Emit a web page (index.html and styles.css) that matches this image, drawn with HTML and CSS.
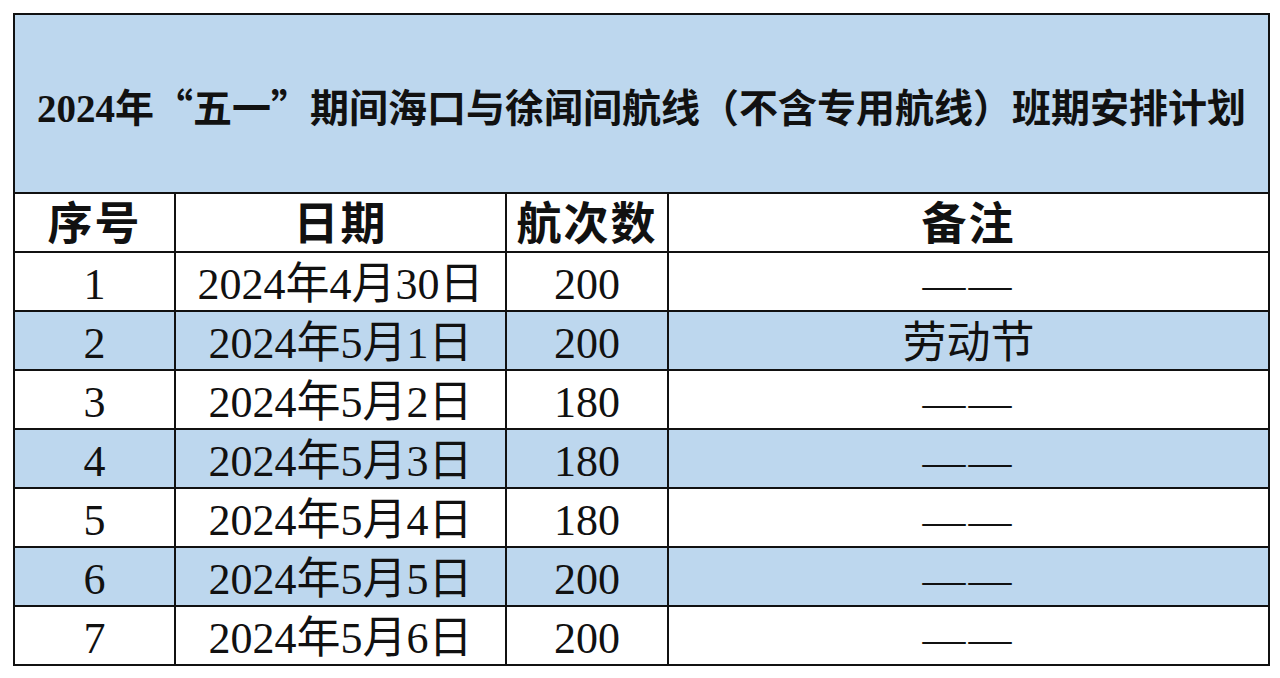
FILE: index.html
```html
<!DOCTYPE html>
<html lang="zh-CN">
<head>
<meta charset="utf-8">
<title>班期安排计划</title>
<link rel="stylesheet" href="styles.css">
</head>
<body>
<table class="plan">
  <colgroup>
    <col class="c-no">
    <col class="c-date">
    <col class="c-count">
    <col class="c-note">
  </colgroup>
  <thead>
    <tr class="title-row">
      <th colspan="4" class="title">2024年<span class="fw">“</span>五一<span class="fw">”</span>期间海口与徐闻间航线（不含专用航线）班期安排计划</th>
    </tr>
    <tr class="head-row">
      <th>序号</th>
      <th>日期</th>
      <th>航次数</th>
      <th>备注</th>
    </tr>
  </thead>
  <tbody>
    <tr><td>1</td><td>2024年4月30日</td><td>200</td><td class="dash">——</td></tr>
    <tr class="blue"><td>2</td><td>2024年5月1日</td><td>200</td><td>劳动节</td></tr>
    <tr><td>3</td><td>2024年5月2日</td><td>180</td><td class="dash">——</td></tr>
    <tr class="blue"><td>4</td><td>2024年5月3日</td><td>180</td><td class="dash">——</td></tr>
    <tr><td>5</td><td>2024年5月4日</td><td>180</td><td class="dash">——</td></tr>
    <tr class="blue"><td>6</td><td>2024年5月5日</td><td>200</td><td class="dash">——</td></tr>
    <tr><td>7</td><td>2024年5月6日</td><td>200</td><td class="dash">——</td></tr>
  </tbody>
</table>
</body>
</html>
```

FILE: styles.css
```css
html, body {
  margin: 0;
  padding: 0;
  background: #ffffff;
}

body {
  padding: 13px 0 0 13px;
  font-family: "Liberation Serif", "Noto Sans CJK SC", serif;
  color: #111111;
}

.plan {
  border-collapse: collapse;
  table-layout: fixed;
  width: 1255px;
  border: 2px solid #111111;
}

.c-no { width: 161px; }
.c-date { width: 331px; }
.c-count { width: 162px; }
.c-note { width: 601px; }

.plan th,
.plan td {
  border: 2px solid #111111;
  text-align: center;
  padding: 6px 0 0 0;
  line-height: 1;
  white-space: nowrap;
  overflow: hidden;
}

.title-row {
  height: 179px;
  background: #bdd7ee;
}

.title {
  font-size: 39px;
  font-weight: 700;
  padding: 0;
  border-bottom-width: 2px;
}

.fw {
  font-family: "Noto Sans CJK SC", sans-serif;
  font-feature-settings: "fwid" 1;
}

.head-row {
  height: 59px;
  background: #ffffff;
}

.head-row th {
  font-size: 45px;
  font-weight: 700;
  letter-spacing: 2px;
  padding-top: 6px;
}

.plan tbody tr {
  height: 59px;
  background: #ffffff;
}

.plan tbody tr.blue {
  background: #bdd7ee;
}

.plan td {
  font-size: 44px;
  font-weight: 400;
}

.plan td.dash {
  letter-spacing: 3px;
  font-size: 43px;
}
```
